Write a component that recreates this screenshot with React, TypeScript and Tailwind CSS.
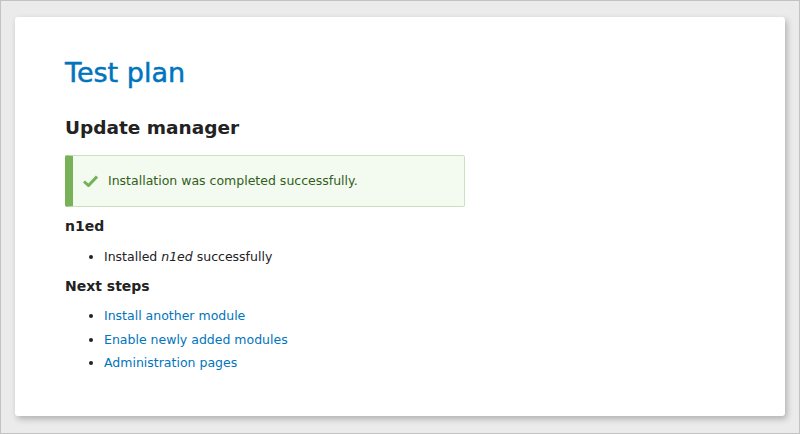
import React from 'react'

const FONT = "font-['DejaVu_Sans','Lucida_Grande',Verdana,sans-serif]"

function CheckIcon() {
  return (
    <svg width="15" height="12" viewBox="0 0 15 12" className="shrink-0">
      <path d="M1 6.5 L5.5 10.5 L14 1.5" fill="none" stroke="#73b355" strokeWidth="3" />
    </svg>
  )
}

const nextSteps = ['Install another module', 'Enable newly added modules', 'Administration pages']

export default function App() {
  return (
    <div className={`${FONT} h-[434px] w-[800px] border border-[#c2c2c2] bg-[#ebebeb] pl-[14px] pr-[14px] pt-[16px]`}>
      <div className="h-[399px] rounded-[3px] bg-white pl-[50px] pt-[38px] shadow-[2px_3px_6px_rgba(0,0,0,0.25)]">
        <h1 className="text-[27px] leading-[36px] text-[#0074bd] [-webkit-text-stroke:0.5px_#0074bd]">Test plan</h1>
        <h2 className="mt-[25px] text-[18.5px] font-bold leading-[24px] text-[#222]">Update manager</h2>
        <div className="mt-[15px] flex h-[52px] w-[400px] items-center gap-[10px] rounded-[2px] border border-[#c9e1bd] border-l-[8px] border-l-[#77b259] bg-[#f3faef] pl-[10px] text-[12.5px] text-[#325e1c]">
          <CheckIcon />
          <span>Installation was completed successfully.</span>
        </div>
        <h3 className="mt-[9px] text-[14px] font-bold leading-[20px] text-[#222]">n1ed</h3>
        <ul className="mt-[11px] list-disc pl-[39px] text-[12.5px] leading-[20px] text-[#222]">
          <li>
            Installed <em>n1ed</em> successfully
          </li>
        </ul>
        <h3 className="mt-[9px] text-[14px] font-bold leading-[20px] text-[#222]">Next steps</h3>
        <ul className="mt-[8px] list-disc pl-[39px] text-[12.5px] leading-[23.5px] text-[#222]">
          {nextSteps.map((s) => (
            <li key={s}>
              <a href="#" className="text-[#0074bd]">
                {s}
              </a>
            </li>
          ))}
        </ul>
      </div>
    </div>
  )
}
